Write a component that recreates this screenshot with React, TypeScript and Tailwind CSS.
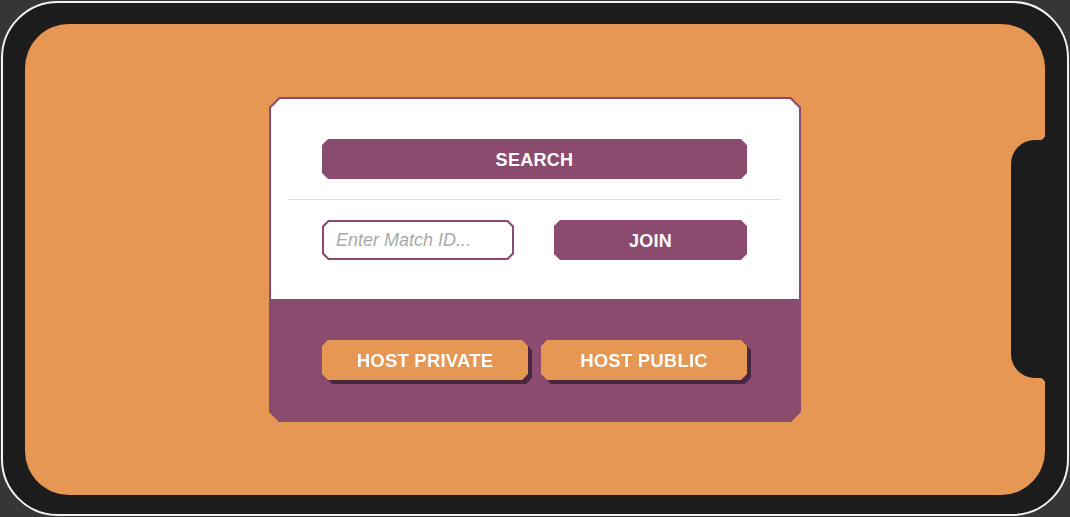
import React from "react";

const chamfer10 =
  "[clip-path:polygon(10px_0,calc(100%_-_10px)_0,100%_10px,100%_calc(100%_-_10px),calc(100%_-_10px)_100%,10px_100%,0_calc(100%_-_10px),0_10px)]";

function Button({ label, tone }: { label: string; tone: "purple" | "orange" }) {
  if (tone === "orange") {
    return (
      <div className="flex-1 drop-shadow-[4px_4px_0_#4b2640]">
        <button className="w-full h-10 pt-[2px] bg-[#e69753] text-white font-bold text-[18.5px] tracking-[0.2px] [clip-path:polygon(6px_0,calc(100%_-_6px)_0,100%_6px,100%_calc(100%_-_6px),calc(100%_-_6px)_100%,6px_100%,0_calc(100%_-_6px),0_6px)]">
          {label}
        </button>
      </div>
    );
  }
  return (
    <button className="w-full h-10 pt-[2px] bg-[#8b4b6e] text-white font-bold text-[18px] tracking-[0.3px] [clip-path:polygon(6px_0,calc(100%_-_6px)_0,100%_6px,100%_calc(100%_-_6px),calc(100%_-_6px)_100%,6px_100%,0_calc(100%_-_6px),0_6px)]">
      {label}
    </button>
  );
}

function MatchCard() {
  return (
    <div className={`w-[532px] bg-[#8b4b6e] px-[2px] pt-[2px] ${chamfer10}`}>
      <div className="h-[200px] bg-white flex flex-col pl-[51px] pr-[52px] pt-10 [clip-path:polygon(9px_0,calc(100%_-_9px)_0,100%_9px,100%_100%,0_100%,0_9px)]">
        <Button label="SEARCH" tone="purple" />
        <div className="h-px bg-[#dcdcdc] -ml-[34px] -mr-[33px] my-5" />
        <div className="flex gap-10">
          <div className="w-[192px] h-10 bg-[#8b4b6e] p-[2px] [clip-path:polygon(6px_0,calc(100%_-_6px)_0,100%_6px,100%_calc(100%_-_6px),calc(100%_-_6px)_100%,6px_100%,0_calc(100%_-_6px),0_6px)]">
            <input
              placeholder="Enter Match ID..."
              className="w-full h-full bg-white px-3 pt-px text-[18px] italic text-[#555] placeholder:text-[#a9a9a9] outline-none [clip-path:polygon(5px_0,calc(100%_-_5px)_0,100%_5px,100%_calc(100%_-_5px),calc(100%_-_5px)_100%,5px_100%,0_calc(100%_-_5px),0_5px)]"
            />
          </div>
          <div className="flex-1">
            <Button label="JOIN" tone="purple" />
          </div>
        </div>
      </div>
      <div className="h-[123px] flex gap-[13px] pl-[51px] pr-[52px] pt-[41px]">
        <Button label="HOST PRIVATE" tone="orange" />
        <Button label="HOST PUBLIC" tone="orange" />
      </div>
    </div>
  );
}

export default function App() {
  return (
    <div className="w-[1070px] h-[517px] bg-[#363636] p-px font-['Liberation_Sans',Arial,sans-serif]">
      <div className="h-full rounded-[57px] border-2 border-[#f2f2f2] bg-[#1c1c1c] pt-[21px] pb-[19px] pl-[22px] pr-[22px]">
        <div className="relative h-full rounded-[44px] bg-[#e69753] flex items-center justify-center">
          <MatchCard />
          {/* notch */}
          <div className="absolute right-0 top-[116px] w-[34px] h-[238px] bg-[#1c1c1c] rounded-l-[24px]" />
          <div className="absolute right-0 top-[110px] w-[6px] h-[6px] bg-[radial-gradient(circle_at_0_0,transparent_6px,#1c1c1c_6.5px)]" />
          <div className="absolute right-0 top-[354px] w-[6px] h-[6px] bg-[radial-gradient(circle_at_0_100%,transparent_6px,#1c1c1c_6.5px)]" />
        </div>
      </div>
    </div>
  );
}
